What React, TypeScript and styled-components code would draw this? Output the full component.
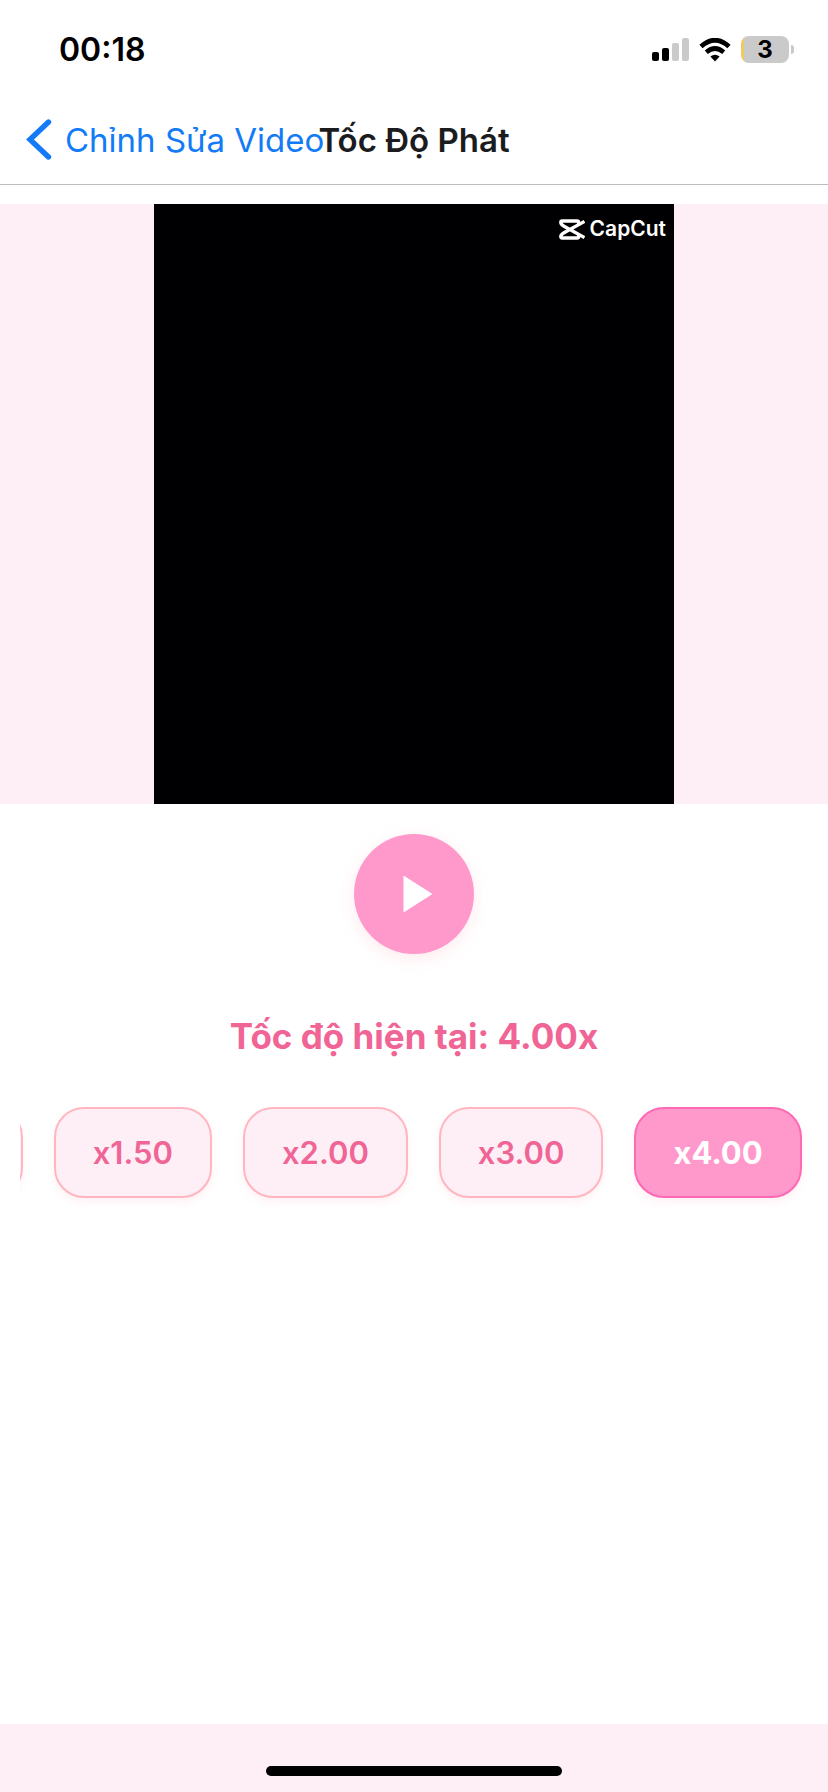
import { useLayoutEffect, useRef, useState } from "react";
import styled, { createGlobalStyle } from "styled-components";

const GlobalStyle = createGlobalStyle`
  *, *::before, *::after { box-sizing: border-box; }
  body {
    margin: 0;
    background: #ffffff;
    font-family: Inter, "Noto Sans", sans-serif;
  }
  button { font-family: inherit; cursor: pointer; }
`;

const Screen = styled.div`
  display: flex;
  flex-direction: column;
  min-height: 100vh;
  background: #ffffff;
`;

const StatusBar = styled.div`
  display: flex;
  align-items: center;
  justify-content: space-between;
  height: 99px;
  padding: 0 33px 0 59px;
`;

const Clock = styled.time`
  font-size: 32px;
  line-height: 40px;
  font-weight: 600;
  color: #000000;
`;

const StatusIcons = styled.div`
  display: flex;
  align-items: center;
  gap: 10px;
`;

const Battery = styled.div`
  position: relative;
  display: flex;
  align-items: center;
  justify-content: center;
  width: 48px;
  height: 27px;
  margin-right: 6px;
  border-radius: 8px;
  background: linear-gradient(to right, #edcb62 3px, #cacaca 3px);
  font-size: 24px;
  line-height: 27px;
  font-weight: 700;
  color: #000000;

  &::after {
    content: "";
    position: absolute;
    left: 50px;
    top: 9px;
    width: 3px;
    height: 9px;
    border-radius: 0 4px 4px 0;
    background: #cacaca;
  }
`;

const NavBar = styled.header`
  display: grid;
  grid-template-columns: minmax(0, 1fr) auto minmax(0, 1fr);
  align-items: center;
  height: 86px;
  padding: 0 26px 4px;
  border-bottom: 1px solid #bcbcbf;
`;

const BackLink = styled.a`
  display: flex;
  align-items: center;
  gap: 13px;
  white-space: nowrap;
  font-size: 33px;
  line-height: 44px;
  color: #147bf6;
  text-decoration: none;

  svg { flex: none; }
`;

const Title = styled.h1`
  margin: 0;
  font-size: 33px;
  line-height: 44px;
  font-weight: 600;
  color: #1c1c1e;
  white-space: nowrap;
`;

const Main = styled.main`
  display: flex;
  flex: 1;
  flex-direction: column;
  align-items: center;
  padding-top: 19px;
`;

const Stage = styled.section`
  display: flex;
  justify-content: center;
  width: 100%;
  background: #fdeff5;
`;

const Video = styled.div`
  display: flex;
  align-items: flex-start;
  justify-content: flex-end;
  width: 520px;
  max-width: 100%;
  height: 600px;
  padding: 12px 8px;
  background: #000002;
`;

const Watermark = styled.div`
  display: flex;
  align-items: center;
  gap: 5px;
  font-size: 21px;
  line-height: 26px;
  font-weight: 600;
  color: #ffffff;
`;

const PlayButton = styled.button`
  display: flex;
  align-items: center;
  justify-content: center;
  width: 120px;
  height: 120px;
  margin-top: 30px;
  padding: 0 0 0 8px;
  border: 0;
  border-radius: 50%;
  background: #ff99cc;
  box-shadow: 0 4px 16px rgba(255, 182, 193, 0.3);
`;

const CurrentSpeed = styled.p`
  margin: 60px 0 0;
  font-size: 35px;
  line-height: 44px;
  font-weight: 700;
  color: #f06595;
`;

const SpeedList = styled.div`
  display: flex;
  gap: 31px;
  align-self: stretch;
  margin: 33px 20px 0;
  padding: 16px 6px;
  overflow-x: auto;
  scrollbar-width: none;
`;

const SpeedButton = styled.button<{ $active: boolean }>`
  flex: none;
  height: 91px;
  padding: 0 37px;
  border: 2px solid ${({ $active }) => ($active ? "#ff69b4" : "#ffb6c1")};
  border-radius: 30px;
  background: ${({ $active }) => ($active ? "#ff99cc" : "#fdeff5")};
  box-shadow: 0 4px 8px rgba(255, 182, 193, 0.2);
  color: ${({ $active }) => ($active ? "#ffffff" : "#f06595")};
  font-size: 31px;
  line-height: 40px;
  font-weight: ${({ $active }) => ($active ? 700 : 600)};
`;

const HomeArea = styled.footer`
  display: flex;
  align-items: flex-end;
  justify-content: center;
  height: 68px;
  padding-bottom: 16px;
  background: #fdeff5;
`;

const HomeIndicator = styled.div`
  width: 296px;
  height: 10px;
  border-radius: 5px;
  background: #000000;
`;

const SignalIcon = () => (
  <svg width="37" height="23" viewBox="0 0 37 23" aria-hidden="true">
    <rect x="0" y="14" width="7" height="9" rx="2" fill="#000" />
    <rect x="10" y="10" width="7" height="13" rx="2" fill="#000" />
    <rect x="20" y="5" width="7" height="18" rx="2" fill="#cacaca" />
    <rect x="30" y="0" width="7" height="23" rx="2" fill="#cacaca" />
  </svg>
);

const WifiIcon = () => (
  <svg width="32" height="24" viewBox="0 0 32 24" aria-hidden="true">
    <path d="M2 8.5Q16 -4 30 8.5" fill="none" stroke="#000" strokeWidth="4.8" />
    <path d="M7.3 14.3Q16 6.7 24.7 14.3" fill="none" stroke="#000" strokeWidth="4.6" />
    <path d="M11.4 18.6Q16 14.8 20.6 18.6L16 23.5Z" fill="#000" />
  </svg>
);

const BackIcon = () => (
  <svg width="26" height="42" viewBox="0 0 26 42" aria-hidden="true">
    <path d="M22.5 3L4 20.5L22.5 38" fill="none" stroke="#147bf6" strokeWidth="5.4" strokeLinecap="round" strokeLinejoin="miter" />
  </svg>
);

const CapCutLogo = () => (
  <svg width="26" height="21" viewBox="0 0 26 21" aria-hidden="true">
    <path
      d="M25.5 2.4L5 13.8Q1.8 15.6 1.8 17.6Q1.8 19 3.2 19H18Q19.6 19 19.6 17.4V15.2M25.5 18.6L5 7.2Q1.8 5.4 1.8 3.4Q1.8 2 3.2 2H18Q19.6 2 19.6 3.6V5.8"
      fill="none"
      stroke="#fff"
      strokeWidth="3.4"
    />
  </svg>
);

const PlayIcon = () => (
  <svg width="30" height="38" viewBox="0 0 30 38" aria-hidden="true">
    <path d="M0.5 0.5L29.5 19L0.5 37.5Z" fill="#fff" />
  </svg>
);

const speeds = [1, 1.5, 2, 3, 4];

export default function App() {
  const [speed, setSpeed] = useState(4);
  const listRef = useRef<HTMLDivElement>(null);

  // Open with the fastest speeds in view.
  useLayoutEffect(() => {
    const list = listRef.current;
    if (list) list.scrollLeft = list.scrollWidth;
  }, []);

  return (
    <Screen>
      <GlobalStyle />
      <StatusBar>
        <Clock>00:18</Clock>
        <StatusIcons>
          <SignalIcon />
          <WifiIcon />
          <Battery>3</Battery>
        </StatusIcons>
      </StatusBar>
      <NavBar>
        <BackLink href="#">
          <BackIcon />
          Chỉnh Sửa Video
        </BackLink>
        <Title>Tốc Độ Phát</Title>
      </NavBar>
      <Main>
        <Stage>
          <Video>
            <Watermark>
              <CapCutLogo />
              CapCut
            </Watermark>
          </Video>
        </Stage>
        <PlayButton type="button" aria-label="Phát">
          <PlayIcon />
        </PlayButton>
        <CurrentSpeed>Tốc độ hiện tại: {speed.toFixed(2)}x</CurrentSpeed>
        <SpeedList ref={listRef}>
          {speeds.map((value) => (
            <SpeedButton
              key={value}
              type="button"
              $active={value === speed}
              aria-pressed={value === speed}
              onClick={() => setSpeed(value)}
            >
              x{value.toFixed(2)}
            </SpeedButton>
          ))}
        </SpeedList>
      </Main>
      <HomeArea>
        <HomeIndicator />
      </HomeArea>
    </Screen>
  );
}
